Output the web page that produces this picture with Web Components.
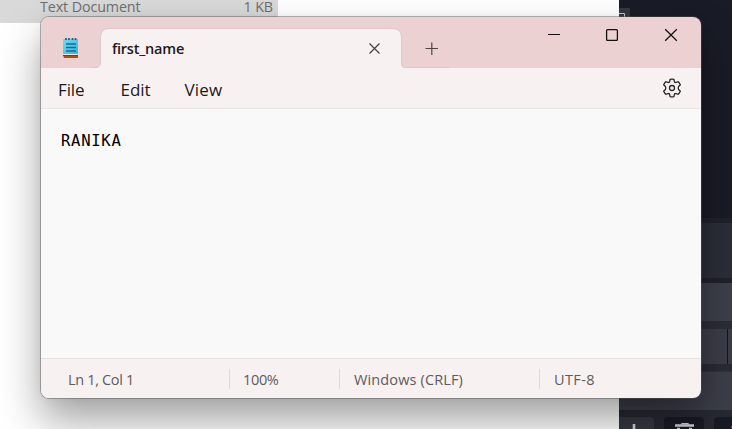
<!DOCTYPE html>
<html lang="en"><head><meta charset="utf-8"><title>first_name - Notepad</title>
<style>html,body{margin:0;height:100%;overflow:hidden}body{font-family:"Open Sans","Noto Sans",sans-serif}</style></head>
<body><desk-top></desk-top>
<script>
const make=(name,html,ready)=>customElements.define(name,class extends HTMLElement{
  constructor(){super();this.attachShadow({mode:'open'}).innerHTML=html}
  connectedCallback(){if(ready)ready(this)}
});
// A label whose tracking is adjusted to fill a given width.
make('fit-text','<style>:host{display:block;flex:none;white-space:pre;text-align:left}span{display:inline-block}</style><span><slot></slot></span>',el=>{
  const s=el.shadowRoot.querySelector('span'),w=+el.getAttribute('width');
  el.style.width=w+'px';
  s.style.letterSpacing=(w-s.getBoundingClientRect().width)/el.textContent.length+'px';
});
make('file-list',`<style>:host{display:block;width:619px;height:429px;background:#fff}
.row{display:flex;justify-content:space-between;width:233px;height:23px;padding:0 5px 0 40px;background:#d9d9d9;color:#6f6f6f;font-size:14.3px;line-height:13px}</style>
<div class="row"><fit-text width="100.5">Text Document</fit-text><fit-text width="29.5">1 KB</fit-text></div>`);
make('dark-panel',`<style>:host{display:flex;flex-direction:column;width:113px;height:429px;background:#191b26;overflow:hidden}
.top{height:218px;box-sizing:border-box;padding-top:8px}.mini{display:block;width:11px;height:9px;background:#363841}
.a{height:5px;background:#20222c}.b{height:55px;background:#2b2d38}.c{height:38px;background:#3d404b}.d{height:8px;background:#2b2d37}
.e{display:flex;height:35px;background:#3b3d48}.e i{width:108px;border-right:1px solid #14161d}.f{height:7px;background:#292b35}.g{height:39px;background:#3c3e49;border-top:1px solid #31343d;box-sizing:border-box}.h{height:7px;background:#272932}
.keys{display:flex;gap:10px;height:12px;background:#272932}.keys div{height:20px;border-radius:4px;background:#181a25}.keys .p{width:35px;background:#353741;border-radius:0 4px 0 0}.keys .t{width:40px}.keys .n{width:30px}svg{display:block}</style>
<div class="top"><svg class="mini" viewBox="0 0 11 9"><path d="M0 5.5H5.5V9" fill="none" stroke="#c0c6c5"/></svg></div><div class="a"></div><div class="b"></div><div class="a"></div><div class="c"></div><div class="d"></div><div class="e"><i></i></div><div class="f"></div><div class="g"></div><div class="h"></div>
<div class="keys"><div class="p"><svg width="35" height="12"><path d="M15 7V12" stroke="#d5d5d8" stroke-width="2.6"/></svg></div><div class="t"><svg width="40" height="12"><path d="M11 8.5H30M13 12H16M25 12H28" stroke="#cdcfd8" stroke-width="2.5"/><path d="M16 7.5L18 6H24L26 7.5" fill="#cdcfd8"/></svg></div><div class="n"><svg width="30" height="12"><path d="M17 10H20" stroke="#aaa" stroke-width="1"/></svg></div></div>`);
make('file-tab',`<style>:host{display:block;position:relative;width:300px;height:39px;color:#1c1a1a}
.shape{position:absolute;left:-10px;top:-1px}.in{position:relative;display:flex;justify-content:space-between;padding:10px 20px 0 11px}
fit-text{font-weight:600;font-size:14.5px;line-height:20px}.x{margin-top:3px}</style>
<svg class="shape" width="360" height="40"><path d="M5 40Q10 39 10 34V9Q10 1 18 1H302Q310 1 310 9V35Q310 40 315 40Z" fill="#f7f1f1"/><path d="M0 39.5H5Q9.5 39 9.5 34V9Q9.5 .5 18 .5H302Q310.5 .5 310.5 9V35Q310.5 39.5 315 39.5H359" fill="none" stroke="#dfc8ca"/></svg>
<div class="in"><fit-text width="72">first_name</fit-text><svg class="x" width="13" height="13"><path d="M1.5 1.5L11.5 11.5M11.5 1.5L1.5 11.5" stroke="#454041" stroke-width="1.2"/></svg></div>`);
make('title-bar',`<style>:host{display:flex;height:51px;background:#ecd1d3}.app{margin:20px 22px 0 22px}
file-tab{margin-top:12px}.plus{margin:25px 0 0 24px;position:relative}.win{display:flex;margin:11px 23px 0 auto;gap:45px}</style>
<svg class="app" width="16" height="22"><defs><linearGradient id="n" x2="1" y2="1"><stop stop-color="#72daf4"/><stop offset="1" stop-color="#37b4dc"/></linearGradient></defs><path d="M0 18H15V21H1Z" fill="#ad5010"/><path d="M0 18H15V19H0Z" fill="#87380b"/><path d="M0 2H15V17H0Z" fill="url(#n)"/><path d="M0 17.5H15" stroke="#f6e7e2"/><path d="M3 1V3M6 1V3M9.5 1V3M12.5 1V3" stroke="#17677f" stroke-width="1.7"/><path d="M3 7H13M3 10.5H13M3 14H13" stroke="#0c7095" stroke-width="1.6"/></svg>
<file-tab></file-tab>
<svg class="plus" width="14" height="13"><path d="M.5 6.5H13M6.8 .5V13" stroke="#4f4546" stroke-width="1.2"/></svg>
<div class="win"><svg width="14" height="14"><path d="M2 6.5H14" stroke="#111" stroke-width="1.2"/></svg><svg width="14" height="14"><rect x="1.6" y="1.6" width="10.8" height="10.8" rx="1" fill="none" stroke="#111" stroke-width="1.3"/></svg><svg width="14" height="14"><path d="M1.2 1.2L12.8 12.8M12.8 1.2L1.2 12.8" stroke="#111" stroke-width="1.3"/></svg></div>`);
make('menu-bar',`<style>:host{display:flex;box-sizing:border-box;height:41px;padding:0 19px 0 17px;background:#f7f1f1;border-bottom:1px solid #ebe5e5;color:#1c1a1a;font-size:17px;line-height:43px}
.e{margin-left:36px}.v{margin-left:34px}svg{margin:10px 0 0 auto}</style>
<fit-text width="26.5">File</fit-text><fit-text class="e" width="30">Edit</fit-text><fit-text class="v" width="38">View</fit-text>
<svg width="20" height="20" fill="none" stroke="#292626" stroke-width="1.3" stroke-linejoin="round"><path d="M8.1 1.4Q10 .8 11.9 1.4L12.4 3.8Q13 4.6 14 4.5L16.2 3.7Q17.7 5 18.3 7L16.5 8.6Q16 10 16.5 11.4L18.3 13Q17.7 15 16.2 16.3L14 15.5Q13 15.4 12.4 16.2L11.9 18.6Q10 19.2 8.1 18.6L7.6 16.2Q7 15.4 6 15.5L3.8 16.3Q2.3 15 1.7 13L3.5 11.4Q4 10 3.5 8.6L1.7 7Q2.3 5 3.8 3.7L6 4.5Q7 4.6 7.6 3.8Z"/><circle cx="10" cy="10" r="2.5"/></svg>`);
make('text-editor',`<style>:host{display:block;flex:1;background:#f9f9f9;padding:22px 0 0 20px;color:#000;font:15.6px/20px "DejaVu Sans Mono",monospace}</style><fit-text width="60.5"></fit-text>`,el=>{
  const s=el.shadowRoot.querySelector('fit-text');s.textContent=el.textContent;
  s.connectedCallback();
});
make('status-bar',`<style>:host{display:flex;box-sizing:border-box;height:40px;background:#f7f1f1;border-top:1px solid #e7e1e1;color:#5f5b5b;font-size:14.5px;line-height:42px}
div{display:flex;box-sizing:border-box;position:relative;padding-left:14px}div+div::before{content:"";width:1px;height:20px;background:#dfd9d9;margin:10px 13px 0 -14px}
.a{width:188px;padding-left:27px}.b{width:110px}.c{width:200px}.c fit-text,.d fit-text{margin-left:1px}</style>
<div class="a"><fit-text width="66">Ln 1, Col 1</fit-text></div><div class="b"><fit-text width="35.5">100%</fit-text></div><div class="c"><fit-text width="109">Windows (CRLF)</fit-text></div><div class="d"><fit-text width="41">UTF-8</fit-text></div>`);
make('note-window',`<style>:host{display:flex;flex-direction:column;width:660px;height:381px;border-radius:8px;box-shadow:0 0 0 1px rgba(85,85,85,.45),0 0 12px rgba(0,0,0,.05),0 22px 42px rgba(0,0,0,.37)}
.body{display:flex;flex-direction:column;flex:1;border-radius:8px;overflow:hidden}</style><div class="body"><title-bar></title-bar><menu-bar></menu-bar><text-editor>RANIKA</text-editor><status-bar></status-bar></div>`);
make('desk-top',`<style>:host{display:flex;position:relative;width:732px;height:429px;overflow:hidden;background:#fff}file-list,dark-panel{flex:none}note-window{position:absolute;left:41px;top:17px}</style><file-list></file-list><dark-panel></dark-panel><note-window></note-window>`);
</script></body></html>
